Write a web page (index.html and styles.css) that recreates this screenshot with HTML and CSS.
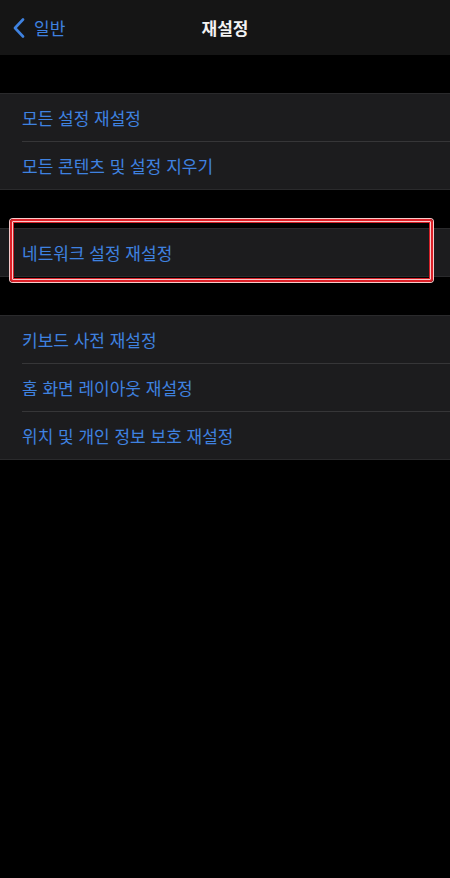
FILE: index.html
```html
<!DOCTYPE html>
<html lang="ko">
<head>
  <meta charset="UTF-8" />
  <meta name="viewport" content="width=device-width, initial-scale=1.0"/>
  <title>재설정</title>
  <link rel="stylesheet" href="styles.css">
</head>
<body>

<header class="navbar">
  <a class="back">
    <svg class="chevron" viewBox="0 0 12 20" width="12" height="20">
      <path d="M10 1.5 L2 10 L10 18.5" fill="none" stroke="#3f82e0" stroke-width="2.6" stroke-linecap="round" stroke-linejoin="round"/>
    </svg>
    <span>일반</span>
  </a>
  <h1 class="title">재설정</h1>
</header>

<div class="group">
  <div class="row">모든 설정 재설정</div>
  <div class="row">모든 콘텐츠 및 설정 지우기</div>
</div>

<div class="group">
  <div class="row">네트워크 설정 재설정</div>
  <div class="mark"></div>
</div>

<div class="group">
  <div class="row">키보드 사전 재설정</div>
  <div class="row">홈 화면 레이아웃 재설정</div>
  <div class="row">위치 및 개인 정보 보호 재설정</div>
</div>

</body>
</html>
```

FILE: styles.css
```css
body {
  margin: 0;
  padding: 0;
  background: #000;
  font-family: "Noto Sans CJK KR", "Noto Sans", sans-serif;
  color: #fff;
}

/* Top bar */
.navbar {
  height: 55px;
  background: #151515;
  display: flex;
  align-items: center;
  justify-content: center;
  position: relative;
}

.back {
  position: absolute;
  left: 13px;
  top: 0;
  height: 55px;
  display: flex;
  align-items: center;
  gap: 9px;
  color: #3f82e0;
  font-size: 17px;
}

.chevron {
  display: block;
}

.title {
  margin: 0;
  font-size: 17px;
  font-weight: 600;
  color: #f2f2f2;
}

/* Settings groups */
.group {
  background: #1c1c1e;
  margin-top: 38px;
  border-top: 1px solid #2a2a2c;
  border-bottom: 1px solid #2a2a2c;
  padding-left: 22px;
  position: relative;
}

.row {
  height: 47px;
  line-height: 47px;
  font-size: 17px;
  color: #3f82e0;
}

.row + .row {
  border-top: 1px solid #363638;
}

/* red annotation box */
.mark {
  position: absolute;
  top: -10px;
  bottom: -6px;
  left: 10px;
  right: 17px;
  border: 2px solid #dc2028;
  border-radius: 3px;
  box-shadow: 0 0 0 1px #f8caca, inset 0 0 0 1px #f8caca, inset 0 0 0 2px #d52028;
}
```
